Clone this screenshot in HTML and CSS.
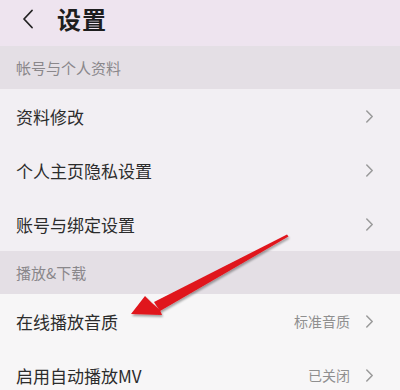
FILE: index.html
```html
<!DOCTYPE html>
<html>
<head>
<meta charset="utf-8">
<link rel="stylesheet" href="styles.css">
</head>
<body>
<div class="page">
  <div class="header">
    <svg class="back" width="12" height="20" viewBox="0 0 12 20"><path d="M10 1.5 L2 10 L10 18.5" fill="none" stroke="#222" stroke-width="1.8" stroke-linecap="round" stroke-linejoin="round"/></svg>
    <span class="title">设置</span>
  </div>
  <div class="section">帐号与个人资料</div>
  <div class="row"><span class="label">资料修改</span><span class="right"><svg class="chev" viewBox="0 0 8 12"><path d="M1.5 1 L6.5 6 L1.5 11" fill="none" stroke="#9a9a9a" stroke-width="1.4" stroke-linecap="round" stroke-linejoin="round"/></svg></span></div>
  <div class="row"><span class="label">个人主页隐私设置</span><span class="right"><svg class="chev" viewBox="0 0 8 12"><path d="M1.5 1 L6.5 6 L1.5 11" fill="none" stroke="#9a9a9a" stroke-width="1.4" stroke-linecap="round" stroke-linejoin="round"/></svg></span></div>
  <div class="row"><span class="label">账号与绑定设置</span><span class="right"><svg class="chev" viewBox="0 0 8 12"><path d="M1.5 1 L6.5 6 L1.5 11" fill="none" stroke="#9a9a9a" stroke-width="1.4" stroke-linecap="round" stroke-linejoin="round"/></svg></span></div>
  <div class="section">播放&amp;下载</div>
  <div class="row row-light"><span class="label">在线播放音质</span><span class="right"><span class="value">标准音质</span><svg class="chev" viewBox="0 0 8 12"><path d="M1.5 1 L6.5 6 L1.5 11" fill="none" stroke="#9a9a9a" stroke-width="1.4" stroke-linecap="round" stroke-linejoin="round"/></svg></span></div>
  <div class="row row-light"><span class="label">启用自动播放MV</span><span class="right"><span class="value">已关闭</span><svg class="chev" viewBox="0 0 8 12"><path d="M1.5 1 L6.5 6 L1.5 11" fill="none" stroke="#9a9a9a" stroke-width="1.4" stroke-linecap="round" stroke-linejoin="round"/></svg></span></div>
  <svg class="arrow" width="400" height="390" viewBox="0 0 400 390">
    <defs>
      <filter id="sh" x="-10%" y="-10%" width="120%" height="120%"><feGaussianBlur in="SourceAlpha" stdDeviation="1.2"/><feOffset dx="1" dy="2"/><feComponentTransfer><feFuncA type="linear" slope="0.35"/></feComponentTransfer><feMerge><feMergeNode/><feMergeNode in="SourceGraphic"/></feMerge></filter>
    </defs>
    <g filter="url(#sh)">
      <path d="M287 234.5 L288.5 236.5 L160 311 L154 302 Z" fill="#e0141c"/>
      <path d="M131 314 L145 296 L152 303 L160 310 L162 315 Z" fill="#e0141c"/>
    </g>
  </svg>
</div>
</body>
</html>
```
FILE: styles.css
```css
html, body { margin: 0; padding: 0; }
body {
  width: 400px; height: 390px; overflow: hidden;
  font-family: "Noto Sans CJK SC", "Noto Sans", sans-serif;
  background: #f5f3f6;
}
.page { position: relative; width: 400px; height: 390px; overflow: hidden; }
.header {
  height: 46px; display: flex; align-items: center;
  padding-left: 22px; box-sizing: border-box;
  background: #eee4ef;
}
.back { margin-top: -8px; }
.title {
  margin-left: 23px; margin-top: -10px;
  font-size: 24px; font-weight: 700; color: #1e1e1e; letter-spacing: 1px;
}
.section {
  height: 43px; display: flex; align-items: center;
  padding-left: 16px; box-sizing: border-box;
  background: #e4dfe5; color: #8a878b; font-size: 15px;
}
.row {
  height: 54px; display: flex; align-items: center; justify-content: space-between;
  padding: 0 26px 0 16px; box-sizing: border-box;
  background: #f2eff3; color: #2c2c2c; font-size: 17px;
}
.row-light { background: #f7f6f7; }
.right { display: flex; align-items: center; }
.value { color: #8f8f8f; font-size: 14px; margin-right: 15px; }
.chev { width: 9px; height: 13px; }
.arrow { position: absolute; left: 0; top: 0; pointer-events: none; }
```
